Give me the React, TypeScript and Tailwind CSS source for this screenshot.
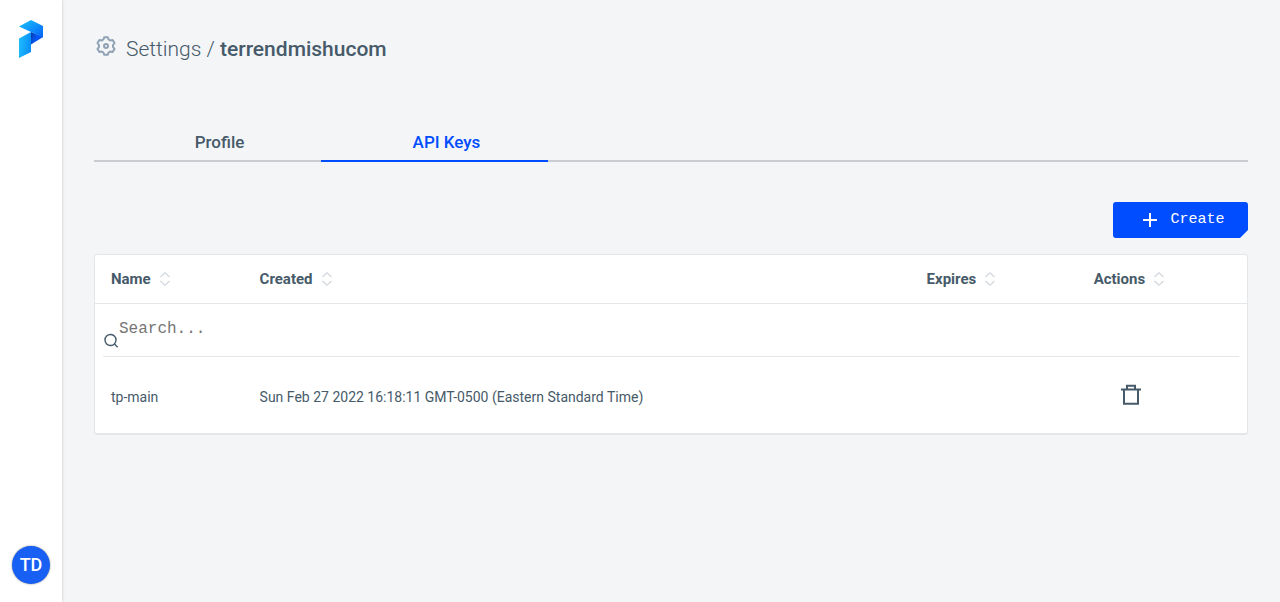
import React from 'react';

const columns = [
  { label: 'Name', width: 'w-[12.9%]' },
  { label: 'Created', width: 'w-[57.9%]' },
  { label: 'Expires', width: 'w-[14.5%]' },
  { label: 'Actions', width: 'w-[14.7%]' },
];

function Logo() {
  return (
    <svg width="24" height="38" viewBox="0 0 24 38" aria-hidden="true">
      <defs>
        <linearGradient id="top" x1="0" y1="0" x2="1" y2="1">
          <stop offset="0" stopColor="#1cc4fb" />
          <stop offset="0.45" stopColor="#109afa" />
          <stop offset="1" stopColor="#0560f8" />
        </linearGradient>
        <linearGradient id="leg" x1="0" y1="0.4" x2="1" y2="0.6">
          <stop offset="0" stopColor="#1ebcfb" />
          <stop offset="1" stopColor="#0a8dfa" />
        </linearGradient>
        <linearGradient id="fold" x1="0" y1="0" x2="1" y2="0.4">
          <stop offset="0" stopColor="#0639a8" />
          <stop offset="0.5" stopColor="#0555f0" />
          <stop offset="1" stopColor="#0750f5" />
        </linearGradient>
      </defs>
      <path d="M12 12 24 17 12 24.500Z" fill="url(#fold)" />
      <path d="M0 6.500 12 0 24 6V17.500L12 12Z" fill="url(#top)" />
      <path d="M0 18.500 12 12V32L0 38Z" fill="url(#leg)" />
    </svg>
  );
}

function GearIcon() {
  return (
    <svg width="20" height="20" viewBox="0 0 20 20" fill="none" stroke="#8fa2b5" strokeWidth="2" strokeLinejoin="round" aria-hidden="true">
      <path d="M8.300 1.200h3.400l.9 2.300 1.500.9 2.500-.5 1.900 3.200-1.500 1.900v2l1.500 1.900-1.900 3.200-2.500-.5-1.500.9-.9 2.300H8.300l-.9-2.300-1.500-.9-2.500.5-1.900-3.200L3 11V9L1.500 7.100l1.900-3.200 2.500.5 1.500-.9z" />
      <circle cx="10" cy="10" r="2" />
    </svg>
  );
}

function SortIcon() {
  return (
    <svg width="10" height="14" viewBox="0 0 10 14" fill="none" stroke="#d3d9df" strokeWidth="1.300" aria-hidden="true">
      <path d="M.5 5 5 .8 9.500 5M.5 9 5 13.200 9.500 9" />
    </svg>
  );
}

export default function App() {
  return (
    <div className="flex min-h-screen bg-[#f3f5f7] font-['Roboto',sans-serif] text-[#465a69]">
      <aside className="z-10 flex w-[62px] shrink-0 flex-col items-center justify-between bg-white pt-5 pb-[18px] shadow-[0_0_3px_rgba(0,0,0,0.2)]">
        <a href="#" aria-label="Home">
          <Logo />
        </a>
        <button type="button" aria-label="Account" className="flex size-[38px] items-center justify-center rounded-full bg-[#1860f4] text-lg font-medium text-white shadow-[0_0_2px_rgba(0,0,0,0.5)]">
          TD
        </button>
      </aside>

      <main className="min-w-0 flex-1 px-8 pt-8">
        <h1 className="flex h-8 items-start gap-[10px] pl-0.5 text-[21px] leading-8">
          <span className="pt-1"><GearIcon /></span>
          <span className="whitespace-nowrap pt-px font-light">
            Settings / <strong className="font-medium">terrendmishucom</strong>
          </span>
        </h1>

        <nav className="mt-14 flex border-b-2 border-[#c9ccd0] text-[17px] leading-9 font-medium">
          <a href="#profile" className="-mb-0.5 w-[227px] border-b-2 border-transparent pt-1 pl-6 text-center">Profile</a>
          <a href="#keys" aria-current="page" className="-mb-0.5 w-[227px] border-b-2 border-[#004dff] pt-1 pl-6 text-center text-[#004dff]">API Keys</a>
        </nav>

        <div className="mt-10 flex justify-end">
          <button type="button" className="flex h-9 w-[135px] items-center justify-center gap-3 rounded-[3px] bg-[#004dff] pl-1.5 font-['Liberation_Mono',monospace] text-[15px] text-white [clip-path:polygon(0_0,100%_0,100%_calc(100%-8px),calc(100%-8px)_100%,0_100%)]">
            <svg width="16" height="16" viewBox="0 0 16 16" fill="none" stroke="currentColor" strokeWidth="2" aria-hidden="true">
              <path d="M8 1v14M1 8h14" />
            </svg>
            <span>Create</span>
          </button>
        </div>

        <div className="mt-4 rounded-[3px] border border-b-2 border-[#e4e7e9] bg-white">
          <table className="w-full table-fixed border-collapse text-left">
            <thead>
              <tr className="h-12 border-b border-[#e4e7e9]">
                {columns.map((column) => (
                  <th key={column.label} scope="col" className={`${column.width} px-4 py-0 font-bold`}>
                    <button type="button" className="flex items-center gap-[9px] text-[15px] leading-6">
                      {column.label}
                      <SortIcon />
                    </button>
                  </th>
                ))}
              </tr>
            </thead>
            <tbody>
              <tr>
                <td colSpan={4} className="px-2 py-0">
                  <div className="flex h-[53px] items-start border-b border-[#e4e7e9]">
                    <svg className="mt-[29px] shrink-0" width="16" height="16" viewBox="0 0 16 16" fill="none" stroke="#465a69" strokeWidth="1.400" aria-hidden="true">
                      <circle cx="7.500" cy="7" r="5.500" />
                      <path d="m11.500 11 3.200 3.200" />
                    </svg>
                    <input
                      type="search"
                      aria-label="Search API keys"
                      placeholder="Search..."
                      className="h-[50px] min-w-0 flex-1 bg-transparent font-['Liberation_Mono',monospace] text-base outline-none placeholder:text-[#757575]"
                    />
                  </div>
                </td>
              </tr>
              <tr className="h-[76px] text-sm">
                <td className="px-4 pt-1">tp-main</td>
                <td className="px-4 pt-1">Sun Feb 27 2022 16:18:11 GMT-0500 (Eastern Standard Time)</td>
                <td className="px-4 pt-1" />
                <td className="px-4 py-0">
                  <button type="button" aria-label="Delete tp-main" className="ml-[26px] block">
                    <svg width="22" height="22" viewBox="0 0 22 22" fill="none" stroke="#465a69" strokeWidth="2" aria-hidden="true">
                      <path d="M1 5.500h20M7 5.500V1.700h8v3.800M4 5.500v14.200h14V5.500" />
                    </svg>
                  </button>
                </td>
              </tr>
            </tbody>
          </table>
        </div>
      </main>
    </div>
  );
}
